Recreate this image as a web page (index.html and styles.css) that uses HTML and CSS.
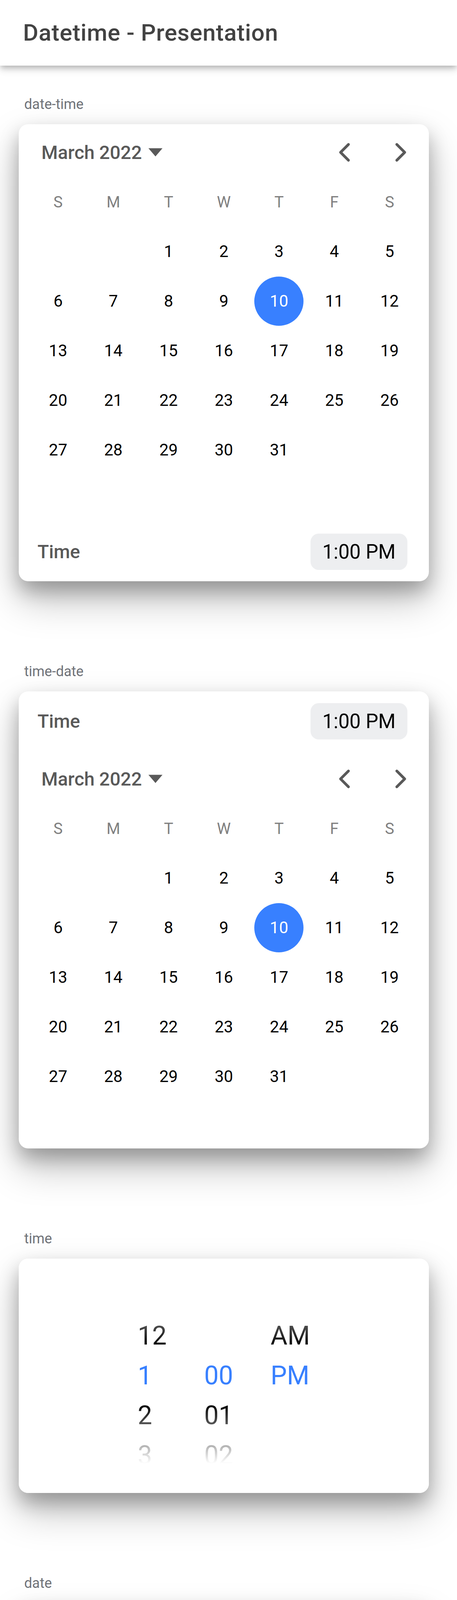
FILE: index.html
```html
<!DOCTYPE html>
<html lang="en">
<head>
<meta charset="utf-8">
<title>Datetime - Presentation</title>
<link rel="stylesheet" href="styles.css">
</head>
<body>
<header class="toolbar"><h1 class="title">Datetime - Presentation</h1></header>
<main class="content">

  <section class="demo">
    <h2 class="demo-label">date-time</h2>
    <div class="datetime">
      <div class="calendar">
        <div class="cal-header">
          <div class="month-year">March 2022<svg class="caret" viewBox="0 0 512 512"><path d="M64 144l192 224 192-224H64z"/></svg></div>
          <div class="nav">
            <span class="nav-btn"><svg viewBox="0 0 512 512"><path d="M328 112L184 256l144 144"/></svg></span>
            <span class="nav-btn"><svg viewBox="0 0 512 512"><path d="M184 112l144 144-144 144"/></svg></span>
          </div>
        </div>
        <div class="weekdays"><span>S</span><span>M</span><span>T</span><span>W</span><span>T</span><span>F</span><span>S</span></div>
        <div class="days">
          <span class="day"></span><span class="day"></span><span class="day">1</span><span class="day">2</span><span class="day">3</span><span class="day">4</span><span class="day">5</span>
          <span class="day">6</span><span class="day">7</span><span class="day">8</span><span class="day">9</span><span class="day selected"><span>10</span></span><span class="day">11</span><span class="day">12</span>
          <span class="day">13</span><span class="day">14</span><span class="day">15</span><span class="day">16</span><span class="day">17</span><span class="day">18</span><span class="day">19</span>
          <span class="day">20</span><span class="day">21</span><span class="day">22</span><span class="day">23</span><span class="day">24</span><span class="day">25</span><span class="day">26</span>
          <span class="day">27</span><span class="day">28</span><span class="day">29</span><span class="day">30</span><span class="day">31</span>
        </div>
      </div>
      <div class="time-row"><span class="time-label">Time</span><span class="time-btn">1:00 PM</span></div>
    </div>
  </section>

  <section class="demo">
    <h2 class="demo-label">time-date</h2>
    <div class="datetime">
      <div class="time-row"><span class="time-label">Time</span><span class="time-btn">1:00 PM</span></div>
      <div class="calendar">
        <div class="cal-header">
          <div class="month-year">March 2022<svg class="caret" viewBox="0 0 512 512"><path d="M64 144l192 224 192-224H64z"/></svg></div>
          <div class="nav">
            <span class="nav-btn"><svg viewBox="0 0 512 512"><path d="M328 112L184 256l144 144"/></svg></span>
            <span class="nav-btn"><svg viewBox="0 0 512 512"><path d="M184 112l144 144-144 144"/></svg></span>
          </div>
        </div>
        <div class="weekdays"><span>S</span><span>M</span><span>T</span><span>W</span><span>T</span><span>F</span><span>S</span></div>
        <div class="days">
          <span class="day"></span><span class="day"></span><span class="day">1</span><span class="day">2</span><span class="day">3</span><span class="day">4</span><span class="day">5</span>
          <span class="day">6</span><span class="day">7</span><span class="day">8</span><span class="day">9</span><span class="day selected"><span>10</span></span><span class="day">11</span><span class="day">12</span>
          <span class="day">13</span><span class="day">14</span><span class="day">15</span><span class="day">16</span><span class="day">17</span><span class="day">18</span><span class="day">19</span>
          <span class="day">20</span><span class="day">21</span><span class="day">22</span><span class="day">23</span><span class="day">24</span><span class="day">25</span><span class="day">26</span>
          <span class="day">27</span><span class="day">28</span><span class="day">29</span><span class="day">30</span><span class="day">31</span>
        </div>
      </div>
    </div>
  </section>

  <section class="demo">
    <h2 class="demo-label">time</h2>
    <div class="datetime">
      <div class="picker">
        <div class="col off1">
          <div class="item">12</div><div class="item active">1</div><div class="item">2</div><div class="item">3</div><div class="item">4</div>
        </div>
        <div class="col off0">
          <div class="item active">00</div><div class="item">01</div><div class="item">02</div><div class="item">03</div><div class="item">04</div>
        </div>
        <div class="col off1">
          <div class="item">AM</div><div class="item active">PM</div>
        </div>
        <div class="fade-top"></div>
        <div class="fade-bottom"></div>
      </div>
    </div>
  </section>

  <section class="demo">
    <h2 class="demo-label">date</h2>
    <div class="datetime">
      <div class="calendar">
        <div class="cal-header">
          <div class="month-year">March 2022<svg class="caret" viewBox="0 0 512 512"><path d="M64 144l192 224 192-224H64z"/></svg></div>
          <div class="nav">
            <span class="nav-btn"><svg viewBox="0 0 512 512"><path d="M328 112L184 256l144 144"/></svg></span>
            <span class="nav-btn"><svg viewBox="0 0 512 512"><path d="M184 112l144 144-144 144"/></svg></span>
          </div>
        </div>
        <div class="weekdays"><span>S</span><span>M</span><span>T</span><span>W</span><span>T</span><span>F</span><span>S</span></div>
        <div class="days">
          <span class="day"></span><span class="day"></span><span class="day">1</span><span class="day">2</span><span class="day">3</span><span class="day">4</span><span class="day">5</span>
          <span class="day">6</span><span class="day">7</span><span class="day">8</span><span class="day">9</span><span class="day selected"><span>10</span></span><span class="day">11</span><span class="day">12</span>
          <span class="day">13</span><span class="day">14</span><span class="day">15</span><span class="day">16</span><span class="day">17</span><span class="day">18</span><span class="day">19</span>
          <span class="day">20</span><span class="day">21</span><span class="day">22</span><span class="day">23</span><span class="day">24</span><span class="day">25</span><span class="day">26</span>
          <span class="day">27</span><span class="day">28</span><span class="day">29</span><span class="day">30</span><span class="day">31</span>
        </div>
      </div>
    </div>
  </section>

  <section class="demo">
    <h2 class="demo-label">month-year</h2>
    <div class="datetime wheel">
      <div class="picker">
        <div class="col off2">
          <div class="item">January</div><div class="item">February</div><div class="item active">March</div><div class="item">April</div><div class="item">May</div><div class="item">June</div><div class="item">July</div><div class="item">August</div><div class="item">September</div><div class="item">October</div><div class="item">November</div><div class="item">December</div>
        </div>
        <div class="col off0">
          <div class="item active">2022</div><div class="item">2021</div><div class="item">2020</div><div class="item">2019</div><div class="item">2018</div>
        </div>
        <div class="fade-top"></div>
        <div class="fade-bottom"></div>
      </div>
    </div>
  </section>

  <section class="demo">
    <h2 class="demo-label">month</h2>
    <div class="datetime wheel">
      <div class="picker">
        <div class="col off2 narrow">
          <div class="item">January</div><div class="item">February</div><div class="item active">March</div><div class="item">April</div><div class="item">May</div><div class="item">June</div>
        </div>
        <div class="fade-top"></div>
        <div class="fade-bottom"></div>
      </div>
    </div>
  </section>

</main>
</body>
</html>
```

FILE: styles.css
```css
* {
  box-sizing: border-box;
}

html,
body {
  margin: 0;
  padding: 0;
  overflow: hidden;
  background: #fff;
}

body {
  font-family: Roboto, "Noto Sans", "Liberation Sans", sans-serif;
  color: #000;
}

/* Toolbar */
.toolbar {
  position: relative;
  z-index: 2;
  height: 168px;
  display: flex;
  align-items: center;
  padding-left: 59px;
  background: #fff;
  box-shadow: 0 6px 12px -3px rgba(0, 0, 0, 0.2), 0 12px 15px 0 rgba(0, 0, 0, 0.1), 0 3px 30px 0 rgba(0, 0, 0, 0.08);
}

.title {
  margin: 0;
  font-size: 60px;
  font-weight: 500;
  letter-spacing: 0.0125em;
  line-height: 1;
  color: #424242;
}

/* Content */
.content {
  padding-top: 78px;
}

.demo + .demo {
  margin-top: 210px;
}

.demo-label {
  margin: 0 0 30px 62px;
  font-size: 36px;
  font-weight: 400;
  line-height: 42px;
  color: #6f7278;
}

.datetime {
  width: 1050px;
  margin-left: 48px;
  background: #fff;
  border-radius: 24px;
  overflow: hidden;
  box-shadow: 0 48px 96px rgba(0, 0, 0, 0.25), 0 24px 48px rgba(0, 0, 0, 0.25);
}

/* Calendar */
.calendar {
  height: 1018px;
}

.cal-header {
  display: flex;
  align-items: center;
  height: 144px;
  padding-left: 58px;
}

.month-year {
  flex: 1;
  display: flex;
  align-items: center;
  font-size: 48px;
  font-weight: 500;
  color: #595959;
}

.caret {
  width: 48px;
  height: 48px;
  margin-left: 11px;
  fill: #595959;
}

.nav {
  display: flex;
}

.nav-btn {
  width: 144px;
  height: 144px;
  display: flex;
  align-items: center;
  justify-content: center;
}

.nav-btn svg {
  width: 72px;
  height: 72px;
  fill: none;
  stroke: #595959;
  stroke-width: 48;
  stroke-linecap: round;
  stroke-linejoin: round;
}

.weekdays,
.days {
  display: grid;
  grid-template-columns: repeat(7, 1fr);
  padding: 0 30px;
}

.weekdays {
  height: 110px;
  align-items: center;
  text-align: center;
  font-size: 40px;
  color: #808080;
}

.days {
  margin-top: 8px;
  grid-auto-rows: 127px;
}

.day {
  display: flex;
  align-items: center;
  justify-content: center;
  font-size: 42px;
  color: #000;
}

.day.selected span {
  width: 126px;
  height: 126px;
  border-radius: 50%;
  background: #3880ff;
  color: #fff;
  display: flex;
  align-items: center;
  justify-content: center;
}

/* Time row */
.time-row {
  height: 152px;
  display: flex;
  align-items: center;
  justify-content: space-between;
  padding: 0 55px 0 48px;
}

.time-label {
  font-size: 48px;
  font-weight: 500;
  color: #595959;
}

.time-btn {
  width: 248px;
  height: 93px;
  border-radius: 21px;
  background: #edeef0;
  display: flex;
  align-items: center;
  justify-content: center;
  font-size: 51px;
  color: #000;
}

/* Wheel pickers */
.wheel {
  padding: 60px 0;
}

.picker {
  position: relative;
  height: 600px;
  overflow: hidden;
  display: flex;
  justify-content: center;
  font-size: 66px;
}

.col {
  flex: none;
  padding: 0 48px;
}

.col.off0 {
  padding-top: 249px;
}

.col.off1 {
  padding-top: 147px;
}

.col.off2 {
  padding-top: 45px;
}

.col.narrow {
  width: 246px;
}

.item {
  height: 102px;
  line-height: 102px;
  white-space: nowrap;
  color: #000;
}

.item.active {
  color: #3880ff;
}

.fade-top {
  position: absolute;
  left: 0;
  right: 0;
  top: 0;
  height: 249px;
  background: linear-gradient(to bottom, #fff 20%, rgba(255, 255, 255, 0) 90%);
  pointer-events: none;
}

.fade-bottom {
  position: absolute;
  left: 0;
  right: 0;
  top: 348px;
  height: 252px;
  background: linear-gradient(to top, #fff 30%, rgba(255, 255, 255, 0) 90%);
  pointer-events: none;
}
```
